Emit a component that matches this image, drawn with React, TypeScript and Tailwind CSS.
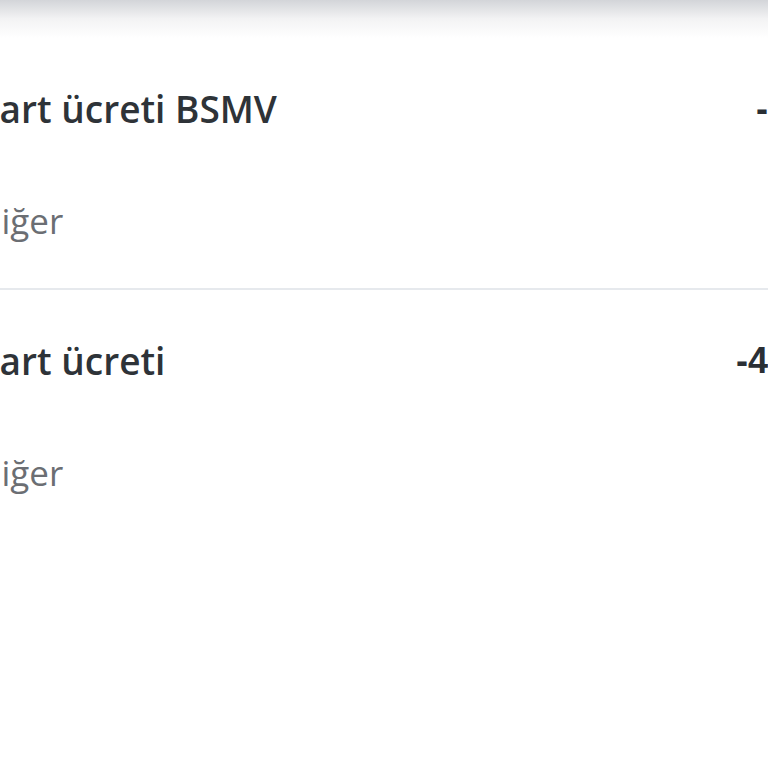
const rows = [
  { title: "Kart ücreti BSMV", category: "Diğer", amount: "-2,00 TL" },
  { title: "Kart ücreti", category: "Diğer", amount: "-40,00 TL" },
];

export default function App() {
  return (
    <div className="w-[768px] h-[768px] bg-white overflow-hidden">
      <div className="h-[38px] bg-gradient-to-b from-[#d3d5d9] via-[#f3f3f4] to-white" />
      <div className="-ml-[24px] w-[916px]">
        {rows.map((row, index) => (
          <div
            key={index}
            className={`${
              index === 0 ? "border-b-2 border-[#e6e9ed]" : ""
            } flex justify-between pt-[51px] pb-[47px]`}
          >
            <div className="flex flex-col font-['Open_Sans',sans-serif]">
              <h2 className="text-[37px] leading-[40px] font-semibold text-[#2e3338]">
                {row.title}
              </h2>
              <p className="mt-[72px] text-[35px] leading-[40px] text-[#6b6e73]">
                {row.category}
              </p>
            </div>
            <div className="font-['Liberation_Sans',Arial,sans-serif] text-[36px] leading-[40px] font-bold text-[#2a2f35]">
              {row.amount}
            </div>
          </div>
        ))}
      </div>
    </div>
  );
}
